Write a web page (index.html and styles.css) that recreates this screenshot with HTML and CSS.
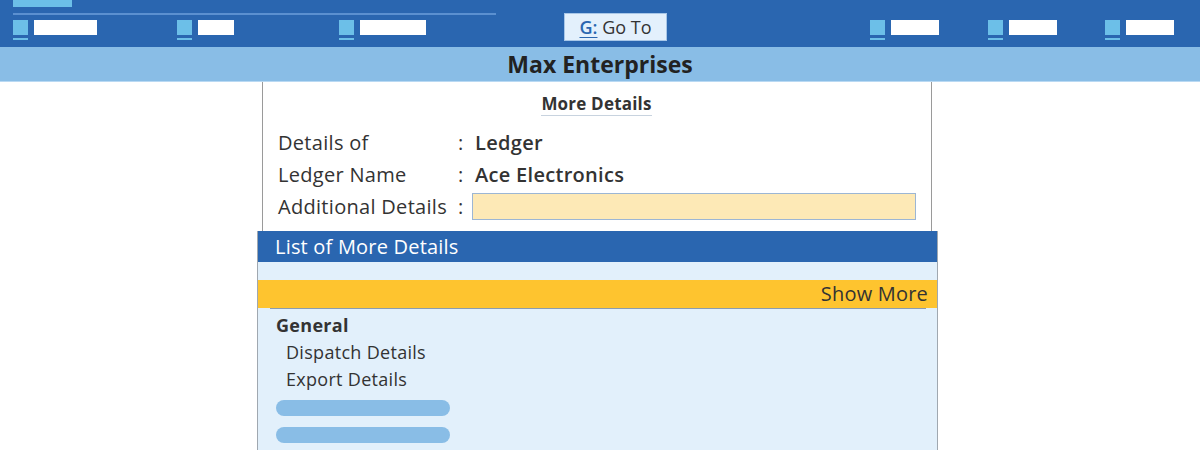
FILE: index.html
```html
<!DOCTYPE html>
<html>
<head>
    <title>More Details</title>
    <link rel="stylesheet" href="styles.css">
</head>
<body>
    <div class="topbar">
        <div class="tab"></div>
        <div class="rule"></div>
        <div class="toolrow">
            <div class="tool"><div class="ico"><span class="sq"></span><span class="ul"></span></div><span class="lbl w63"></span></div>
            <div class="tool"><div class="ico"><span class="sq"></span><span class="ul"></span></div><span class="lbl w36"></span></div>
            <div class="tool"><div class="ico"><span class="sq"></span><span class="ul"></span></div><span class="lbl w66"></span></div>
            <div class="goto"><span class="key">G:</span> Go To</div>
            <div class="tool"><div class="ico"><span class="sq"></span><span class="ul"></span></div><span class="lbl w48"></span></div>
            <div class="tool"><div class="ico"><span class="sq"></span><span class="ul"></span></div><span class="lbl w48"></span></div>
            <div class="tool"><div class="ico"><span class="sq"></span><span class="ul"></span></div><span class="lbl w48"></span></div>
        </div>
    </div>

    <div class="titlebar">Max Enterprises</div>

    <div class="main">
        <div class="details">
            <div class="heading"><span>More Details</span></div>
            <div class="fields">
                <span class="label">Details of</span><span class="colon">:</span><span class="value">Ledger</span>
                <span class="label">Ledger Name</span><span class="colon">:</span><span class="value">Ace Electronics</span>
                <span class="label">Additional Details</span><span class="colon">:</span><span class="input"></span>
            </div>
        </div>

        <div class="list">
            <div class="list-head">List of More Details</div>
            <div class="list-gap"></div>
            <div class="show-more">Show More</div>
            <div class="list-line"></div>
            <div class="list-body">
                <div class="group">General</div>
                <div class="item">Dispatch Details</div>
                <div class="item">Export Details</div>
                <div class="pill"></div>
                <div class="pill"></div>
            </div>
        </div>
    </div>
</body>
</html>
```

FILE: styles.css
```css
body {
    margin: 0;
    font-family: "Open Sans", "Liberation Sans", sans-serif;
    color: #333;
    background-color: white;
    overflow: hidden;
}
.topbar {
    height: 47px;
    background-color: #2a66b0;
}
.tab {
    width: 59px;
    height: 7px;
    margin-left: 13px;
    background-color: #6cbfe8;
}
.rule {
    width: 483px;
    height: 2px;
    margin: 6px 0 0 13px;
    background-color: #5b90d0;
}
.toolrow {
    display: grid;
    grid-template-columns: 164px 162px 225px 306px 118px 117px auto;
    align-items: end;
    padding-left: 13px;
}
.tool {
    display: flex;
    align-items: flex-start;
    gap: 6px;
    padding-bottom: 1px;
}
.ico {
    display: flex;
    flex-direction: column;
    gap: 3px;
}
.sq {
    width: 15px;
    height: 15px;
    background-color: #6cbfe8;
}
.ul {
    width: 15px;
    height: 2px;
    background-color: #6cbfe8;
}
.lbl {
    height: 15px;
    background-color: white;
}
.w36 { width: 36px; }
.w48 { width: 48px; }
.w63 { width: 63px; }
.w66 { width: 66px; }
.goto {
    width: 101px;
    height: 26px;
    margin-top: -2px;
    border: 1px solid #a8c7e8;
    background-color: #e3f0fc;
    font-size: 18px;
    line-height: 26px;
    text-align: center;
    color: #333;
}
.goto .key {
    color: #2a66b0;
    font-weight: 600;
    text-decoration: underline;
    text-underline-offset: 3px;
}
.titlebar {
    height: 34px;
    line-height: 34px;
    background-color: #89bde6;
    border-bottom: 1px solid #b9d9f3;
    text-align: center;
    font-size: 23px;
    font-weight: bold;
    color: #222;
}
.main {
    width: 681px;
    margin-left: 257px;
}
.details {
    margin: 0 6px 0 5px;
    padding: 11px 0 9px 15px;
    border-left: 1px solid #9a9a9a;
    border-right: 1px solid #9a9a9a;
}
.heading {
    text-align: center;
    margin-right: 16px;
    margin-bottom: 10px;
}
.heading span {
    display: inline-block;
    font-size: 17px;
    font-weight: bold;
    line-height: 22px;
    letter-spacing: 0.2px;
    border-bottom: 1px solid #c8d3df;
}
.fields {
    display: grid;
    grid-template-columns: 180px 14px 444px;
    grid-auto-rows: 32px;
    align-items: center;
    font-size: 20px;
    letter-spacing: 0.3px;
}
.value {
    padding-left: 3px;
    font-weight: 600;
}
.input {
    height: 25px;
    margin-top: 1px;
    border: 1px solid #9cb6d4;
    background-color: #fde9b6;
}
.list {
    border-left: 1px solid #a0a8b0;
    border-right: 1px solid #a0a8b0;
    background-color: #e2f0fb;
    height: 230px;
}
.list-head {
    height: 31px;
    padding-left: 17px;
    line-height: 31px;
    background-color: #2a66b0;
    color: white;
    font-size: 20px;
    letter-spacing: 0.2px;
}
.list-gap {
    height: 18px;
}
.show-more {
    height: 28px;
    line-height: 28px;
    padding-right: 9px;
    text-align: right;
    background-color: #fec42f;
    font-size: 20px;
    letter-spacing: 0.2px;
}
.list-line {
    height: 1px;
    margin: 0 11px 0 12px;
    background-color: #8a9cb0;
}
.list-body {
    padding: 3px 0 0 18px;
    font-size: 18px;
    line-height: 27px;
    letter-spacing: 0.3px;
}
.group {
    font-weight: bold;
}
.item {
    padding-left: 10px;
}
.pill {
    width: 174px;
    height: 16px;
    margin-top: 7px;
    border-radius: 8px;
    background-color: #89bde6;
}
.pill + .pill {
    margin-top: 11px;
}
```
